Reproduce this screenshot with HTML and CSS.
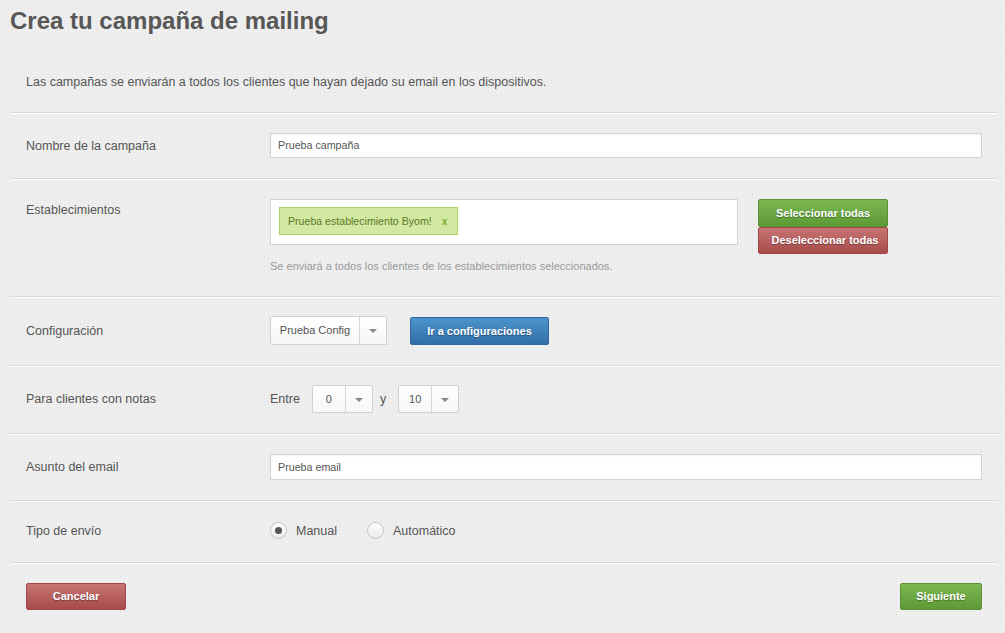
FILE: index.html
```html
<!DOCTYPE html>
<html lang="es">
<head>
<meta charset="utf-8">
<title>Crea tu campaña de mailing</title>
<link rel="stylesheet" href="styles.css">
</head>
<body>
<div class="page">
  <h1 class="title">Crea tu campaña de mailing</h1>
  <p class="intro">Las campañas se enviarán a todos los clientes que hayan dejado su email en los dispositivos.</p>

  <div class="row">
    <div class="label">Nombre de la campaña</div>
    <div class="control"><div class="input">Prueba campaña</div></div>
  </div>

  <div class="row row-est">
    <div class="label label-top">Establecimientos</div>
    <div class="control">
      <div class="est-line">
        <div class="tagbox"><span class="tag">Prueba establecimiento Byom! <b class="tag-x">x</b></span></div>
        <div class="btn-stack">
          <span class="btn btn-green btn-wide">Seleccionar todas</span>
          <span class="btn btn-red btn-wide">Deseleccionar todas</span>
        </div>
      </div>
      <div class="help">Se enviará a todos los clientes de los establecimientos seleccionados.</div>
    </div>
  </div>

  <div class="row row-sel">
    <div class="label">Configuración</div>
    <div class="control inline">
      <div class="select sel-config"><span class="sel-text">Prueba Config</span><span class="sel-caret"></span></div>
      <span class="btn btn-blue btn-config">Ir a configuraciones</span>
    </div>
  </div>

  <div class="row row-sel">
    <div class="label">Para clientes con notas</div>
    <div class="control inline">
      <span class="word">Entre</span>
      <div class="select sel-num"><span class="sel-text">0</span><span class="sel-caret"></span></div>
      <span class="word word-y">y</span>
      <div class="select sel-num"><span class="sel-text">10</span><span class="sel-caret"></span></div>
    </div>
  </div>

  <div class="row">
    <div class="label">Asunto del email</div>
    <div class="control"><div class="input input-subject">Prueba email</div></div>
  </div>

  <div class="row row-radio">
    <div class="label">Tipo de envío</div>
    <div class="control inline">
      <span class="radio checked"></span><span class="radio-label">Manual</span>
      <span class="radio"></span><span class="radio-label">Automático</span>
    </div>
  </div>

  <div class="row footer">
    <span class="btn btn-red btn-cancel">Cancelar</span>
    <span class="btn btn-green btn-next">Siguiente</span>
  </div>
</div>
</body>
</html>
```

FILE: styles.css
```css
html, body {
  margin: 0;
  padding: 0;
}
body {
  background-color: #efefef;
  background-image:
    repeating-linear-gradient(0deg, rgba(0,0,0,0.012) 0 1px, transparent 1px 3px),
    repeating-linear-gradient(90deg, rgba(0,0,0,0.012) 0 1px, transparent 1px 4px);
  font-family: "Liberation Sans", Arial, sans-serif;
  color: #555;
  font-size: 12.5px;
}
.page {
  width: 988px;
  padding: 0 7px 0 10px;
}
.title {
  margin: 0;
  padding-top: 6px;
  height: 31px;
  font-size: 24px;
  line-height: 30px;
  font-weight: bold;
  color: #575757;
}
.intro {
  margin: 0;
  padding: 38px 16px 0;
  height: 37px;
  line-height: 14px;
  font-size: 12.5px;
  color: #555;
}
.row {
  display: flex;
  border-top: 1px solid #d6d6d6;
  box-shadow: inset 0 1px 0 #fff;
  padding: 20px 16px 20px;
  align-items: center;
}
.label {
  width: 244px;
  flex: none;
  font-size: 12.5px;
  color: #555;
}
.label-top {
  align-self: flex-start;
  padding-top: 4px;
}
.control {
  flex: 1;
}
.inline {
  display: flex;
  align-items: center;
}
.input {
  box-sizing: border-box;
  height: 25px;
  background: #fff;
  border: 1px solid #d3d3d3;
  box-shadow: inset 0 1px 2px rgba(0,0,0,0.05);
  font-size: 10.7px;
  line-height: 23px;
  padding: 0 7px;
  color: #555;
}
.input-subject {
  height: 26px;
  line-height: 24px;
}
.row-est {
  padding-bottom: 24px;
}
.est-line {
  display: flex;
  align-items: flex-start;
}
.tagbox {
  box-sizing: border-box;
  width: 468px;
  height: 46px;
  background: #fff;
  border: 1px solid #d3d3d3;
  padding: 7px 8px;
}
.tag {
  display: inline-block;
  box-sizing: border-box;
  height: 28px;
  line-height: 26px;
  padding: 0 10px 0 8px;
  background: #d2e8a3;
  border: 1px solid #a9d164;
  color: #5c7a24;
  font-size: 10.6px;
}
.tag-x {
  color: #7cab2c;
  margin-left: 7px;
  font-size: 10px;
}
.btn-stack {
  margin-left: 20px;
  display: flex;
  flex-direction: column;
}
.btn {
  display: inline-block;
  box-sizing: border-box;
  text-align: center;
  color: #fff;
  font-weight: bold;
  font-size: 11px;
  text-shadow: 0 1px 1px rgba(0,0,0,0.35);
  border-radius: 2px;
  white-space: nowrap;
}
.btn-green {
  background: linear-gradient(#7bb852, #5d9a35);
  border: 1px solid #5a8f35;
}
.btn-red {
  background: linear-gradient(#c77473, #a74c4b);
  border: 1px solid #9e4746;
}
.btn-blue {
  background: linear-gradient(#4c94cc, #326ea8);
  border: 1px solid #2f67a0;
}
.btn-wide {
  width: 130px;
  height: 28px;
  line-height: 26px;
}
.btn-stack .btn-red {
  height: 27px;
  line-height: 25px;
  padding-left: 4px;
}
.help {
  margin-top: 6px;
  font-size: 11px;
  color: #999;
}
.row-sel {
  padding-top: 19px;
}
.select {
  box-sizing: border-box;
  display: flex;
  height: 29px;
  background: linear-gradient(#fff, #f6f6f6);
  border: 1px solid #d0d0d0;
  border-radius: 2px;
  font-size: 11px;
  color: #555;
}
.sel-text {
  flex: 1;
  text-align: center;
  line-height: 27px;
  border-right: 1px solid #d6d6d6;
}
.sel-caret {
  width: 26px;
  flex: none;
  position: relative;
}
.sel-caret::after {
  content: "";
  position: absolute;
  left: 9px;
  top: 12px;
  border-left: 4px solid transparent;
  border-right: 4px solid transparent;
  border-top: 4px solid #888;
}
.sel-config {
  width: 117px;
}
.btn-config {
  margin-left: 23px;
  width: 139px;
  height: 28px;
  line-height: 26px;
}
.word {
  font-size: 12.5px;
  color: #555;
}
.sel-num {
  width: 61px;
  height: 28px;
  margin-left: 12px;
}
.sel-num .sel-text {
  line-height: 26px;
}
.word-y {
  margin-left: 7px;
  margin-right: 0;
}
.row-radio {
  padding-top: 21px;
  padding-bottom: 23px;
}
.radio {
  box-sizing: border-box;
  width: 17px;
  height: 17px;
  border-radius: 50%;
  border: 1px solid #c4c4c4;
  background: linear-gradient(#fff, #e9e9e9);
  position: relative;
}
.radio.checked::after {
  content: "";
  position: absolute;
  left: 4px;
  top: 4px;
  width: 7px;
  height: 7px;
  border-radius: 50%;
  background: #555;
}
.radio-label {
  margin-left: 9px;
  margin-right: 30px;
  font-size: 12.5px;
  color: #555;
}
.footer {
  justify-content: space-between;
  padding-top: 20px;
  padding-bottom: 20px;
}
.btn-cancel {
  width: 100px;
  height: 27px;
  line-height: 25px;
}
.btn-next {
  width: 82px;
  height: 27px;
  line-height: 25px;
}
```
